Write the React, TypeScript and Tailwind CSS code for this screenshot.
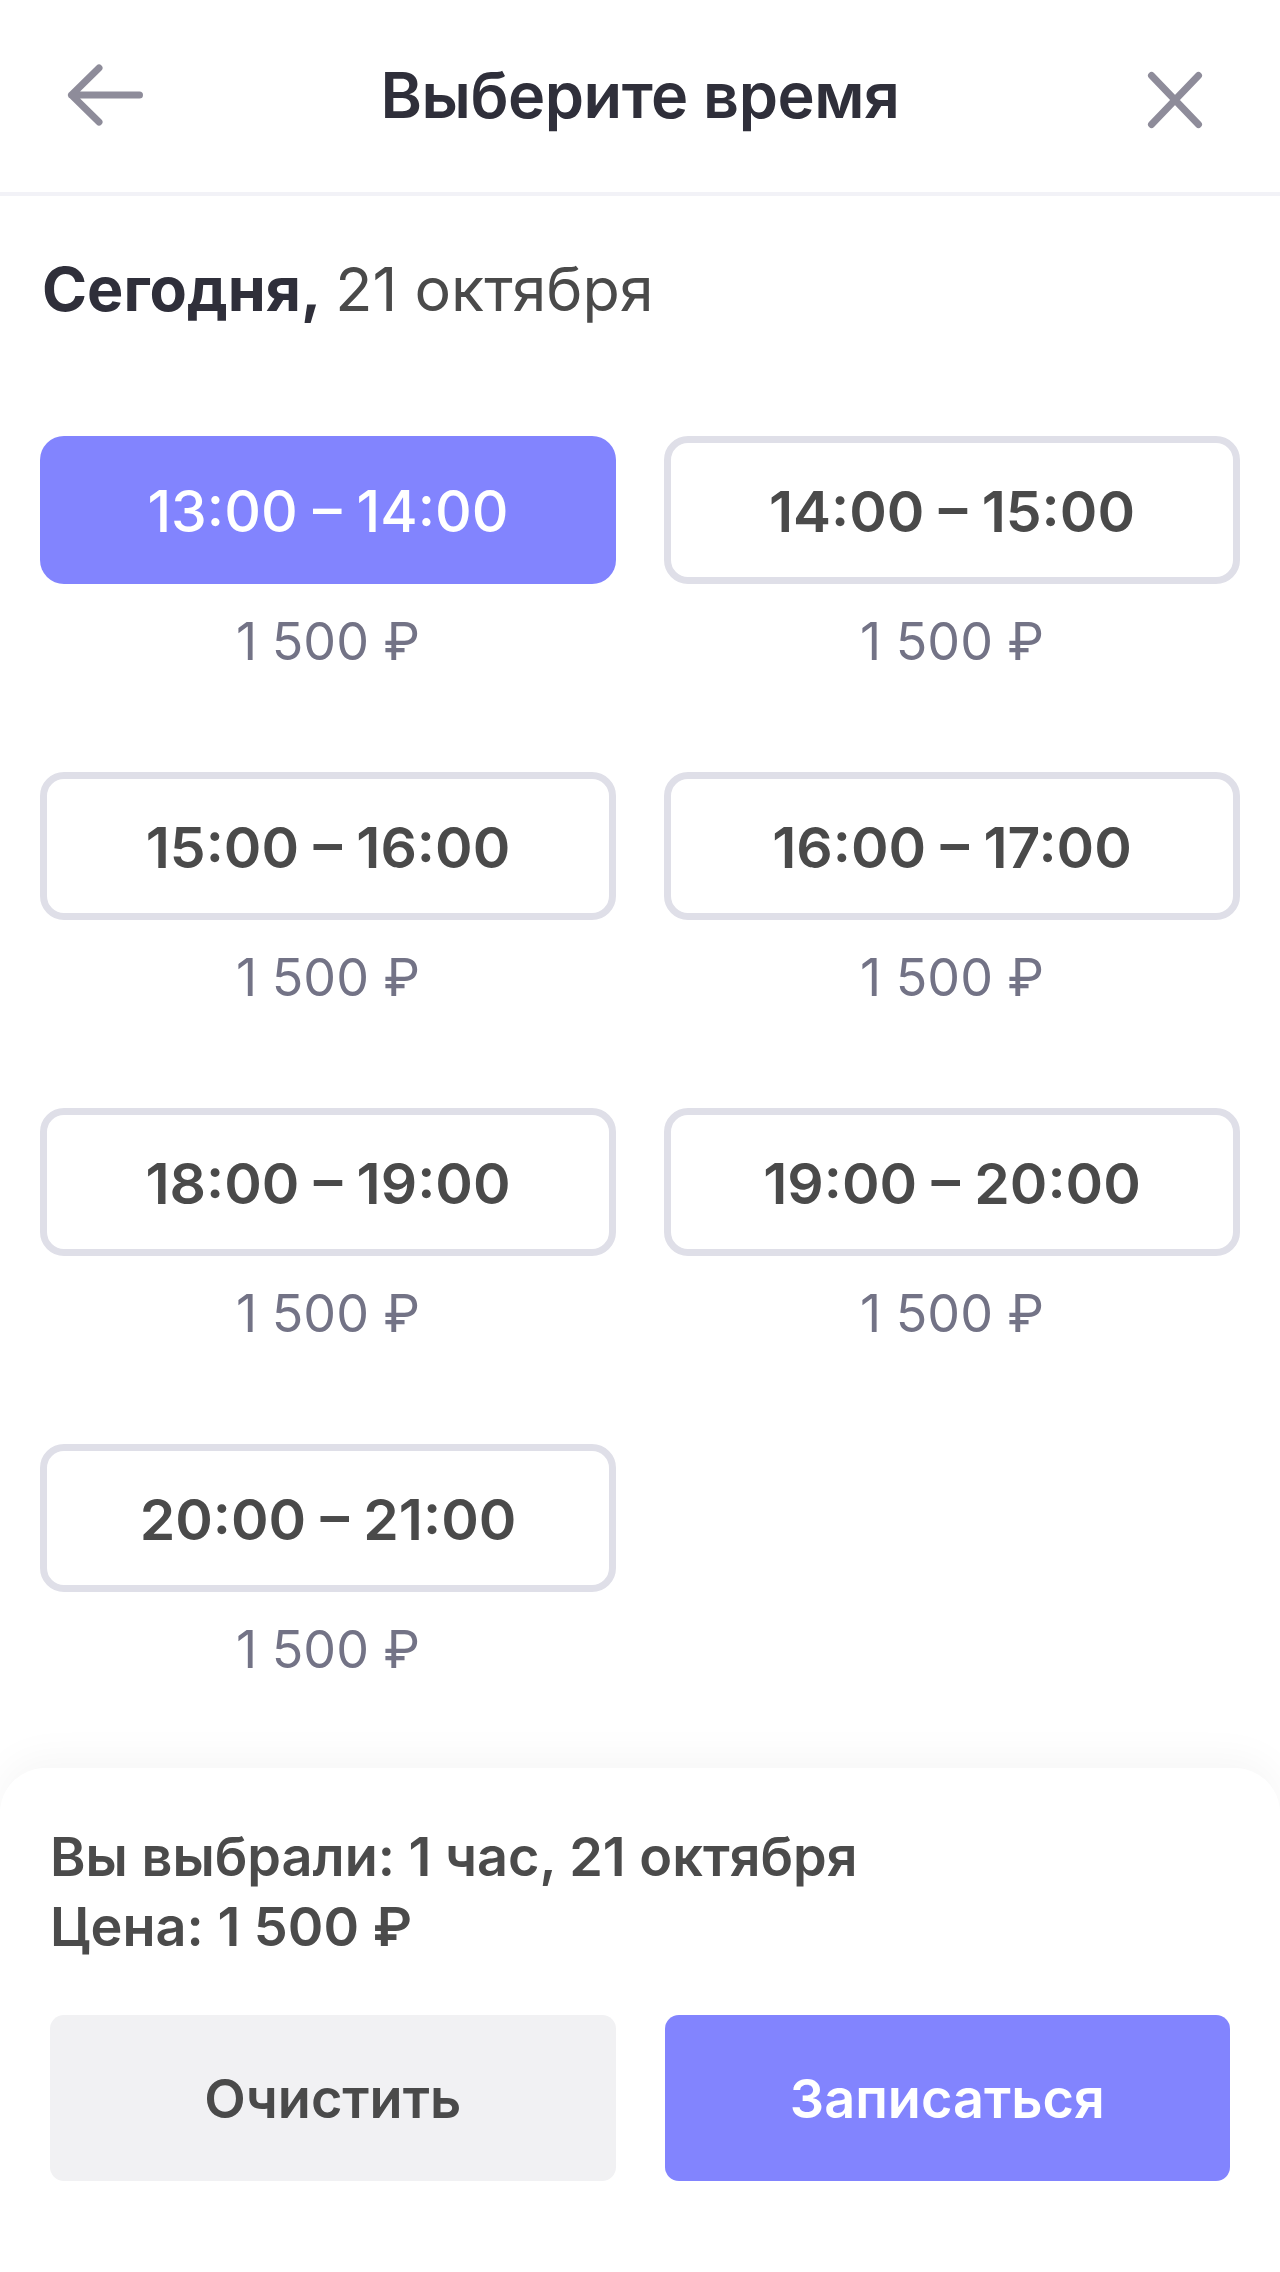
const slots = [
  "13:00 – 14:00",
  "14:00 – 15:00",
  "15:00 – 16:00",
  "16:00 – 17:00",
  "18:00 – 19:00",
  "19:00 – 20:00",
  "20:00 – 21:00",
];

const font = "font-['Inter','Noto_Sans',sans-serif]";

function BackIcon() {
  return (
    <svg width="82" height="72" viewBox="0 0 82 72" fill="none">
      <path
        d="M35 9 L7.5 36 L35 63 M7.5 36 H75.5"
        stroke="#8e8c9a"
        strokeWidth="7"
        strokeLinecap="round"
        strokeLinejoin="round"
      />
    </svg>
  );
}

function CloseIcon() {
  return (
    <svg width="62" height="64" viewBox="0 0 62 64" fill="none">
      <path
        d="M7.5 7.5 L54.5 56.5 M54.5 7.5 L7.5 56.5"
        stroke="#8e8c9a"
        strokeWidth="7"
        strokeLinecap="round"
      />
    </svg>
  );
}

function Slot({ time, selected }: { time: string; selected: boolean }) {
  return (
    <div className="flex flex-col">
      <button
        className={
          selected
            ? "flex h-[148px] items-center justify-center rounded-[24px] bg-[#8284fe] pt-[4px] text-[57px] font-medium text-white"
            : "flex h-[148px] items-center justify-center rounded-[24px] border-[7px] border-[#dfdfe8] bg-white pt-[4px] text-[57px] font-semibold text-[#4a4a4a]"
        }
      >
        {time}
      </button>
      <div className="mt-[27px] text-center text-[52px] leading-[62px] text-[#737386]">
        1 500 ₽
      </div>
    </div>
  );
}

export default function App() {
  return (
    <div className={`${font} flex h-[2272px] w-[1280px] flex-col bg-white`}>
      <header className="grid h-[196px] grid-cols-[1fr_auto_1fr] items-center border-b-4 border-[#f2f2f7] pb-[2px]">
        <div className="pl-[64px]">
          <BackIcon />
        </div>
        <h1 className="text-[63px] font-semibold tracking-[-0.5px] text-[#2f2f3a]">
          Выберите время
        </h1>
        <div className="flex justify-end pr-[74px] pt-[10px]">
          <CloseIcon />
        </div>
      </header>

      <div className="mt-[57px] px-[42px] text-[61px] leading-[72px]">
        <span className="font-bold text-[#2f2f3a]">Сегодня,</span>
        <span className="ml-[14px] text-[#4a4a4a]">21 октября</span>
      </div>

      <div className="mt-[111px] grid grid-cols-2 gap-x-[48px] gap-y-[99px] px-[40px]">
        {slots.map((t, i) => (
          <Slot key={t} time={t} selected={i === 0} />
        ))}
      </div>

      <div className="mt-auto h-[504px] rounded-t-[45px] bg-white px-[50px] pt-[54px] shadow-[0_-10px_40px_rgba(0,0,0,0.04)]">
        <div className="text-[54px] font-semibold leading-[70px] text-[#4b4b4b]">
          <p>Вы выбрали: 1 час, 21 октября</p>
          <p>Цена: 1 500 ₽</p>
        </div>
        <div className="mt-[53px] grid grid-cols-2 gap-[49px]">
          <button className="h-[166px] rounded-[14px] bg-[#f1f1f3] text-[54px] font-semibold text-[#4a4a4a]">
            Очистить
          </button>
          <button className="h-[166px] rounded-[14px] bg-[#8284fe] text-[54px] font-semibold text-white">
            Записаться
          </button>
        </div>
      </div>
    </div>
  );
}
